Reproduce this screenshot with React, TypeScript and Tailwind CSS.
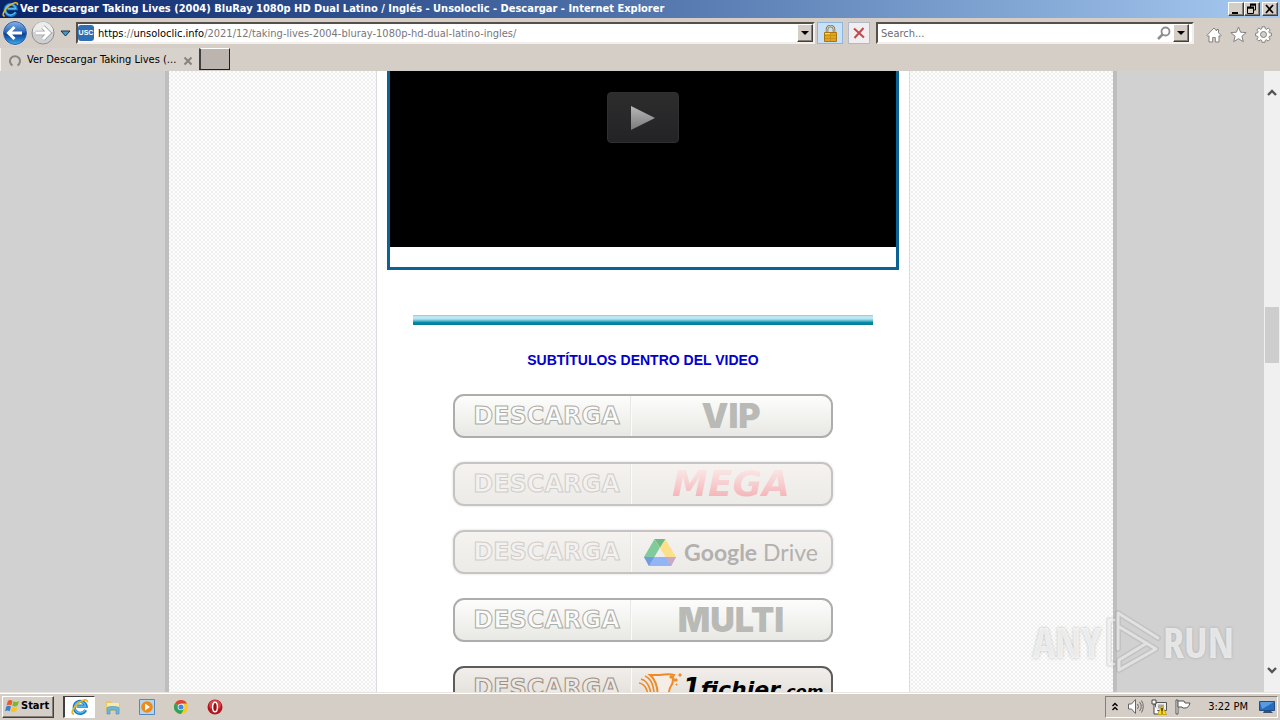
import type { ReactNode } from "react";

const raised =
  "border border-t-white border-l-white border-r-[#404040] border-b-[#404040] bg-[#d5cec7] shadow-[inset_-1px_-1px_0_#848079]";

function IeLogo({ className }: { className: string }) {
  return (
    <svg className={className} viewBox="0 0 18 18" fill="none" aria-hidden="true">
      <path d="M14.6 12.1a6 6 0 1 1 .5-3.9H5.6" stroke="#1677c4" strokeWidth="3.2" />
      <path d="M14.2 11.6a5.6 5.6 0 1 1 .4-3.4H6" stroke="#59b9ee" strokeWidth="1.4" />
      <path d="M3 15.8C-.6 16.4 1.4 10.2 7 5.5 11.8 1.500 17 .3 16.400 4.400" stroke="#e9b51c" strokeWidth="1.7" />
    </svg>
  );
}

function DownTriangle() {
  return (
    <svg className="h-1 w-2" viewBox="0 0 8 4" aria-hidden="true">
      <path d="M0 0h8L4 4z" fill="#000" />
    </svg>
  );
}

function TitleBar() {
  return (
    <header className="flex h-[18px] shrink-0 items-center bg-linear-to-r from-[#0a246a] to-[#a6caf0] pl-[2px] pr-[2px] text-white">
      <IeLogo className="size-[17px] shrink-0" />
      <h1 className="ml-px flex-1 truncate pt-px font-['DejaVu_Sans_Condensed','DejaVu_Sans',sans-serif] text-[11px] font-bold">
        Ver Descargar Taking Lives (2004) BluRay 1080p HD Dual Latino / Inglés - Unsoloclic - Descargar - Internet Explorer
      </h1>
      <div className="flex">
        <button aria-label="Minimize" className={`flex h-[14px] w-4 items-center justify-center ${raised}`}>
          <svg className="size-3" viewBox="0 0 12 12"><path d="M2 9h6v2H2z" fill="#000" /></svg>
        </button>
        <button aria-label="Restore" className={`flex h-[14px] w-4 items-center justify-center ${raised}`}>
          <svg className="size-3" viewBox="0 0 12 12" fill="none" stroke="#000">
            <path d="M4 2h6M4.500 1v3M9.500 1v6H8M2 5h5M1.500 4v6.500h6V4" /><path d="M4 1.500h6M1 4.500h7" strokeWidth="2" />
          </svg>
        </button>
        <button aria-label="Close" className={`ml-[2px] flex h-[14px] w-4 items-center justify-center ${raised}`}>
          <svg className="size-3" viewBox="0 0 12 12"><path d="M2 2l7 8M9 2l-7 8" stroke="#000" strokeWidth="1.7" /></svg>
        </button>
      </div>
    </header>
  );
}

function NavBar() {
  return (
    <nav className="flex h-[30px] shrink-0 items-center bg-[#d5cec7] pl-[2px] pr-2">
      <button aria-label="Back" className="size-[26px] shrink-0">
        <svg viewBox="0 0 26 26">
          <defs>
            <linearGradient id="back" x1="0" y1="0" x2="0" y2="1">
              <stop offset="0" stopColor="#8ab7ea" /><stop offset=".45" stopColor="#2d68b8" />
              <stop offset=".55" stopColor="#0d3f94" /><stop offset="1" stopColor="#41b2f2" />
            </linearGradient>
          </defs>
          <circle cx="13" cy="13" r="12" fill="url(#back)" stroke="#f4f4f4" />
          <circle cx="13" cy="13" r="11.500" fill="none" stroke="#315d9a" />
          <path d="M20 13H7M12.500 7L6.500 13l6 6" fill="none" stroke="#fff" strokeWidth="3" />
        </svg>
      </button>
      <button aria-label="Forward" className="ml-[3px] size-6 shrink-0">
        <svg viewBox="0 0 24 24">
          <circle cx="12" cy="12" r="11" fill="#cfcfd1" stroke="#8d8f92" />
          <path d="M1.800 11a10.200 10.200 0 0 1 20.400 0z" fill="#ececec" />
          <path d="M4.500 12h13M12 6l6 6-6 6" fill="none" stroke="#a2a4a7" strokeWidth="4.600" />
          <path d="M4.500 12h13M12 6l6 6-6 6" fill="none" stroke="#fff" strokeWidth="3" />
        </svg>
      </button>
      <button aria-label="Recent pages" className="ml-[5px] w-[11px] shrink-0">
        <svg viewBox="0 0 11 7"><path d="M1 1h9L5.500 6z" fill="#3f9bc9" stroke="#17324d" /></svg>
      </button>
      <div className="ml-[5px] flex h-[22px] flex-1 items-center border-2 border-t-[#57504a] border-l-[#57504a] border-r-[#f3efec] border-b-[#f3efec] bg-white">
        <span className="flex size-4 shrink-0 items-center justify-center rounded-[3px] bg-[#2f6eb2] font-['Liberation_Sans',sans-serif] text-[7px] font-bold text-white">
          USC
        </span>
        <div
          role="textbox"
          aria-label="Address"
          className="ml-1 flex-1 truncate pt-[2px] font-['DejaVu_Sans_Condensed','DejaVu_Sans',sans-serif] text-[11px] text-[#77777b]"
        >
          <span className="text-black">https</span>://<span className="text-black">unsoloclic.info</span>
          /2021/12/taking-lives-2004-bluray-1080p-hd-dual-latino-ingles/
        </div>
        <button aria-label="Show address list" className={`flex h-[18px] w-4 items-center justify-center ${raised}`}>
          <DownTriangle />
        </button>
      </div>
      <button aria-label="Security report" className="ml-[2px] flex h-[22px] w-[26px] items-center justify-center border border-[#8db6dc] bg-[#c9e0f9]">
        <svg className="h-[17px] w-[15px]" viewBox="0 0 15 17">
          <path d="M4 8V4.500a3.500 3.500 0 0 1 7 0V8" fill="none" stroke="#7d7454" strokeWidth="2.600" />
          <path d="M4 8V4.500a3.500 3.500 0 0 1 7 0V8" fill="none" stroke="#dedac0" />
          <path d="M1.500 7.500h12v9h-12z" fill="#e0a51b" stroke="#a8760e" />
          <path d="M2 10.500h11M2 13.500h11M7.500 8v8" stroke="#c9921a" />
          <path d="M2 8.500h5" stroke="#fbdc68" />
        </svg>
      </button>
      <button aria-label="Stop" className="ml-[5px] flex size-[22px] items-center justify-center border border-[#b3b8c4] bg-[#f0eef0]">
        <svg className="size-3" viewBox="0 0 12 12"><path d="M1 1.500l10 9M10.500 1L1.500 11" stroke="#c24a4c" strokeWidth="2" /></svg>
      </button>
      <div className="ml-[6px] flex h-[22px] w-[318px] items-center border-2 border-t-[#57504a] border-l-[#57504a] border-r-[#f3efec] border-b-[#f3efec] bg-white pr-[3px]">
        <input
          aria-label="Search"
          placeholder="Search..."
          className="min-w-0 flex-1 bg-transparent pt-[2px] pl-[3px] font-['DejaVu_Sans_Condensed','DejaVu_Sans',sans-serif] text-[11px] outline-none placeholder:text-[#6d6d6d]"
        />
        <svg className="mr-[2px] size-[14px]" viewBox="0 0 14 14" fill="none" stroke="#8b8d91" strokeWidth="1.800">
          <circle cx="8.500" cy="5.500" r="4" /><path d="M5.500 8.500L1 13" strokeWidth="2.500" />
        </svg>
        <button aria-label="Search options" className={`flex h-[18px] w-4 items-center justify-center ${raised}`}>
          <DownTriangle />
        </button>
      </div>
      <div className="ml-3 flex items-center gap-2 pt-[3px]">
        <button aria-label="Home" className="size-4">
          <svg viewBox="0 0 16 16">
            <path d="M8 1L.8 8.500l1.200 1 1-.8V15h3.700v-4.500h2.600V15H13V8.700l1 .8 1.200-1L12.500 5.800V2.500h-1.800V4z" fill="#fff" stroke="#85817e" />
          </svg>
        </button>
        <button aria-label="Favorites" className="size-[17px]">
          <svg viewBox="0 0 17 17">
            <path d="M8.500 1l2.100 5.200 5.600.4-4.300 3.600 1.400 5.500-4.800-3-4.800 3 1.400-5.500L.8 6.600l5.600-.4z" fill="#fff" stroke="#85817e" />
          </svg>
        </button>
        <button aria-label="Tools" className="size-[17px]">
          <svg viewBox="0 0 17 17">
            <path
              d="M7 .8h3l.3 2 1.300.6L13.300 2l1.900 2-1.300 1.500.5 1.400 2 .3v2.700l-2 .3-.5 1.300 1.300 1.600-2 2-1.600-1.300-1.300.5-.3 2H7l-.3-2-1.300-.5-1.600 1.300-2-2 1.300-1.600-.5-1.300-2-.3V7.200l2-.3.500-1.300L1.800 4l2-2 1.600 1.300 1.300-.5z"
              fill="#fff" stroke="#85817e"
            />
            <circle cx="8.500" cy="8.500" r="3" fill="#d5cec7" stroke="#85817e" />
          </svg>
        </button>
      </div>
    </nav>
  );
}

function TabStrip() {
  return (
    <div className="flex h-[23px] shrink-0 items-start bg-[#d5cec7] font-['DejaVu_Sans_Condensed','DejaVu_Sans',sans-serif] text-[11px]">
      <div className="flex h-full w-[199px] items-center border-l border-[#f5f2ef] bg-[#d8d2cc] pt-[2px] pl-2 pr-[6px]">
        <svg className="size-3 shrink-0" viewBox="0 0 12 12" fill="none">
          <path d="M3.500 10.500a5 5 0 1 1 5 0" stroke="#8a8683" strokeWidth="2" />
        </svg>
        <span className="ml-[6px] flex-1 whitespace-nowrap">Ver Descargar Taking Lives (...</span>
        <button aria-label="Close tab" className="size-[10px] shrink-0">
          <svg viewBox="0 0 10 10"><path d="M1.500 1.500l7 7M8.500 1.500l-7 7" stroke="#87827e" strokeWidth="2" /></svg>
        </button>
      </div>
      <button
        aria-label="New tab"
        className="h-[22px] w-[31px] border border-t-white border-l-2 border-l-[#404040] border-r-[#202020] border-b-[#202020] bg-[#bcb4ae]"
      />
    </div>
  );
}

type Tone = "gray" | "faint" | "strong";

const frames: Record<Tone, string> = {
  gray: "border-[#adaeab] from-[#fdfefc] to-[#e8e9e4]",
  faint: "border-[#c6c4c2] from-[#f5f2f0] to-[#ecebe8] shadow-[0_0_2px_1px_#f0efee]",
  strong: "border-[#5b5c5b] from-[#f1eeeb] to-[#dfd9d3]",
};

const engraved: Record<Tone, string> = {
  gray: "[-webkit-text-stroke:1px_#acaca9] text-[#fbfbf9]",
  faint: "[-webkit-text-stroke:1px_#d0cdca] text-[#f4f1ef]",
  strong: "[-webkit-text-stroke:1px_#9b8f86] text-[#eee9e4]",
};

function DownloadButton({ tone, label, children }: { tone: Tone; label: string; children: ReactNode }) {
  return (
    <a
      href="#descarga"
      aria-label={`Descarga ${label}`}
      className={`flex h-11 w-[380px] shrink-0 items-center rounded-[11px] border-2 bg-linear-to-b ${frames[tone]}`}
    >
      <span className="flex h-full w-[176px] items-center justify-center border-r border-[#e8e8e4] pl-2 shadow-[1px_0_0_#fbfbf9]">
        <span className={`font-['DejaVu_Sans',sans-serif] text-[24px] leading-6 font-bold ${engraved[tone]}`}>DESCARGA</span>
      </span>
      <span className="flex h-full flex-1 items-center justify-center">{children}</span>
    </a>
  );
}

function DriveLogo() {
  return (
    <svg className="h-[27px] w-8 shrink-0" viewBox="0 0 32 27" aria-hidden="true">
      <path d="M10.500 0L0 18l5 9L16 8.500z" fill="#7fcb9b" />
      <path d="M10.500 0h10.800L32 18H21.500z" fill="#fce18a" />
      <path d="M10.500 18H32l-5 9H5z" fill="#94b5f5" />
      <path d="M10.500 0h10.800L16 8.500z" fill="#6db98a" />
      <path d="M21.500 18H32l-5 9z" fill="#c9a9c4" />
      <path d="M0 18h10.500L5 27z" fill="#739be5" />
    </svg>
  );
}

function FichierLogo() {
  return (
    <svg className="h-[34px] w-[44px] shrink-0" viewBox="0 0 44 34" fill="none" stroke="#f08a24" aria-hidden="true">
      <path d="M0 12c7 1 9 8 10 20M2 8c7 2 10 9 11 24M6 5c7 3 9 10 10 26" strokeWidth="1.600" />
      <path d="M11 4h10c5 0 8-2 14 0-3 4 1 6-3 11-3 4-1 7-4 13l-9 4c0-13-1-22-8-28z" fill="#f5ede6" strokeWidth="2" />
      <path d="M35 8h3v2h-3zM40 3h2v2h-2zM37 13h1v1h-1zM31 5h2v2h-2z" fill="#f08a24" strokeWidth="1" />
    </svg>
  );
}

function Page() {
  return (
    <main className="flex min-w-0 flex-1 justify-center overflow-hidden bg-[#d1d1d1] pl-[18px]">
      <div className="flex w-full max-w-[952px] justify-center border-x-4 border-[#bebebe] bg-[#fbfbfb] bg-[conic-gradient(#eeeeee_25%,#fdfdfd_0_50%,#f1f1f1_0_75%,#fdfdfd_0)] bg-[length:4px_4px] pl-1">
        <article className="flex w-[534px] flex-col items-center border-x border-[#d9dce0] bg-white">
          <div className="flex w-[512px] shrink-0 flex-col border-[3px] border-t-0 border-[#0a6394] bg-white pb-5">
            <div className="flex h-44 items-start justify-center bg-black pt-[21px]">
              <button
                aria-label="Play video"
                className="flex h-[51px] w-[72px] items-center justify-center rounded-[4px] border border-[#303032] bg-linear-to-b from-[#2d2d2d] to-[#232327]"
              >
                <svg className="h-6 w-6" viewBox="0 0 24 24">
                  <defs>
                    <linearGradient id="play" x1="0" y1="0" x2="0" y2="1">
                      <stop offset="0" stopColor="#b8b8b8" /><stop offset="1" stopColor="#797979" />
                    </linearGradient>
                  </defs>
                  <path d="M0 0l24 12L0 24z" fill="url(#play)" />
                </svg>
              </button>
            </div>
          </div>
          <div className="mt-[45px] h-[10px] w-[460px] shrink-0 bg-linear-[180deg,#8fc8d6_0%,#c8edf6_20%,#b0e2ee_40%,#55b4cd_60%,#068aa6_75%,#087c98_100%]" />
          <h2 className="mt-[25px] mb-6 font-['Liberation_Sans',Arial,sans-serif] text-[14px] leading-5 font-bold text-[#0000d0]">
            SUBTÍTULOS DENTRO DEL VIDEO
          </h2>
          <div className="flex flex-col gap-6">
            <DownloadButton tone="gray" label="VIP">
              <span className="font-[Inter,sans-serif] text-[34px] leading-10 font-black text-[#b9bab6]">VIP</span>
            </DownloadButton>
            <DownloadButton tone="faint" label="Mega">
              <span className="bg-linear-to-b from-[#f9e2e2] from-20% to-[#f4b7bb] to-80% bg-clip-text px-1 font-['DejaVu_Sans',sans-serif] text-[36px] leading-10 font-bold text-transparent italic">
                MEGA
              </span>
            </DownloadButton>
            <DownloadButton tone="faint" label="Google Drive">
              <DriveLogo />
              <span className="ml-2 font-[Lato,sans-serif] text-[23px] leading-10 whitespace-nowrap text-[#b2b1af]">
                <span className="font-bold">Google</span> Drive
              </span>
            </DownloadButton>
            <DownloadButton tone="gray" label="Multi">
              <span className="font-[Inter,sans-serif] text-[34px] leading-10 font-black text-[#b9bab6]">MULTI</span>
            </DownloadButton>
            <DownloadButton tone="strong" label="1fichier.com">
              <FichierLogo />
              <span className="font-['DejaVu_Sans',sans-serif] font-bold whitespace-nowrap text-black italic">
                <span className="text-[26px]">1</span>
                <span className="text-[22px]">fichier</span>
                <span className="text-[16px]">.com</span>
              </span>
            </DownloadButton>
          </div>
        </article>
      </div>
    </main>
  );
}

function ScrollBar() {
  return (
    <aside className="flex w-4 shrink-0 flex-col items-center justify-between bg-[#f0f0f0] py-4" aria-label="Scroll bar">
      <button aria-label="Scroll up" className="w-[10px]">
        <svg viewBox="0 0 10 10" fill="none"><path d="M1 8l4-4 4 4" stroke="#555" strokeWidth="2.400" /></svg>
      </button>
      <div className="flex w-full flex-1 flex-col">
        <div className="grow-[210]" />
        <div className="mx-px h-14 bg-[#cdcdcd]" />
        <div className="grow-[304]" />
      </div>
      <button aria-label="Scroll down" className="w-[10px]">
        <svg viewBox="0 0 10 10" fill="none"><path d="M1 2l4 4 4-4" stroke="#555" strokeWidth="2.400" /></svg>
      </button>
    </aside>
  );
}

function Watermark() {
  return (
    <div className="pointer-events-none absolute right-[46px] bottom-[18px] flex items-center font-['Open_Sans_Condensed','Roboto_Condensed','Noto_Sans_Condensed',Roboto,sans-serif] text-[42px] leading-[64px] font-light text-white/70 [text-shadow:0_0_3px_#8888]">
      <span>ANY</span>
      <svg className="h-16 w-[62px]" viewBox="0 0 62 64" fill="none" strokeLinejoin="round" strokeLinecap="round">
        <g stroke="#777" strokeOpacity=".16" strokeWidth="6">
          <path d="M13 10H8v44h5M17 39V3l40 25M17 16l38 23-37 21V50l28-17" />
        </g>
        <g stroke="#fff" strokeOpacity=".5" strokeWidth="3">
          <path d="M13 10H8v44h5M17 39V3l40 25M17 16l38 23-37 21V50l28-17" />
        </g>
      </svg>
      <span>RUN</span>
    </div>
  );
}

function TaskBar() {
  return (
    <footer className="flex h-7 shrink-0 items-center border-t border-[#e8e4e0] bg-[#d5cec7] pl-[2px] font-['DejaVu_Sans_Condensed','DejaVu_Sans',sans-serif] text-[11px] shadow-[inset_0_1px_0_#fff]">
      <button className={`flex h-[22px] w-[52px] items-center pl-[2px] font-bold ${raised}`}>
        <svg className="mr-px size-[15px] shrink-0" viewBox="0 0 16 16">
          <path d="M3 2c2-1.500 3.500-1 5 0L6.700 7C5 6 3.500 6 1.700 7z" fill="#e95b24" />
          <path d="M9 2.500c2 1 3.500 1 6-.3L13.500 7c-2 1.200-3.500 1.200-5.700.3z" fill="#7db72f" />
          <path d="M1.400 8c1.800-1 3.300-1 5 0L5 13c-1.700-1-3.200-1-5 0z" fill="#3a7fd0" />
          <path d="M7.500 8.300c2 1 3.600 1 5.700-.2L12 13c-2 1.300-3.700 1.300-5.900.3z" fill="#f7c525" />
        </svg>
        Start
      </button>
      <button aria-label="Internet Explorer" className="ml-[9px] flex h-[22px] w-8 items-center justify-center border border-t-[#404040] border-l-2 border-l-[#404040] border-r-white border-b-white bg-white">
        <IeLogo className="size-[18px]" />
      </button>
      <button aria-label="Windows Explorer" className="ml-[9px] flex w-[18px] justify-center">
        <svg className="size-4" viewBox="0 0 16 16">
          <path d="M1 2h5l1 2h8v8H1z" fill="#e9c95f" /><path d="M2 4h12v5H2z" fill="#f9eaa8" />
          <path d="M2 9c0-2 12-2 12 0v6h-3v-4H5v4H2z" fill="#6cb7df" stroke="#478fbb" strokeWidth=".6" />
        </svg>
      </button>
      <button aria-label="Media Player" className="ml-4 flex w-[18px] justify-center">
        <svg className="size-4" viewBox="0 0 16 16">
          <path d="M.5.500h15v15H.5z" fill="#b6d4ed" stroke="#5189c0" />
          <circle cx="8" cy="8" r="5.800" fill="#ef8a18" /><path d="M6 4.500l5 3.500-5 3.500z" fill="#fff" />
        </svg>
      </button>
      <button aria-label="Chrome" className="ml-4 flex w-[18px] justify-center">
        <svg className="size-[14px]" viewBox="0 0 14 14">
          <circle cx="7" cy="7" r="7" fill="#f5c928" />
          <path d="M7 7L.9 3.500A7 7 0 0 1 13.100 3.500H7z" fill="#dc4437" />
          <path d="M7 7L.9 3.500A7 7 0 0 0 7 14l3-5z" fill="#2ca45a" />
          <circle cx="7" cy="7" r="3.300" fill="#fff" /><circle cx="7" cy="7" r="2.600" fill="#4285e8" />
        </svg>
      </button>
      <button aria-label="Opera" className="ml-4 flex w-[18px] justify-center">
        <svg className="size-4" viewBox="0 0 16 16">
          <circle cx="8" cy="8" r="7.500" fill="#b3161d" /><ellipse cx="8" cy="6" rx="6" ry="5" fill="#d64348" />
          <ellipse cx="8" cy="8" rx="2.400" ry="4.800" fill="#981016" stroke="#fff" strokeWidth="1.400" />
        </svg>
      </button>
      <div className="mr-[2px] ml-auto flex h-[22px] items-center border border-t-[#848079] border-l-[#848079] border-r-white border-b-white pr-[2px] pl-[6px]">
        <button aria-label="Show hidden icons" className="w-[6px]">
          <svg viewBox="0 0 6 9" fill="none"><path d="M.5 4L3 1.500 5.500 4M.5 8L3 5.500 5.500 8" stroke="#000" strokeWidth="1.400" /></svg>
        </button>
        <button aria-label="Volume" className="ml-[9px] size-[17px]">
          <svg viewBox="0 0 17 17" fill="#fff" stroke="#666">
            <path d="M1.500 6h3l4-4.500v14l-4-4.500h-3z" /><path d="M10.500 6q2 2.500 0 5M12.500 4q3.500 4.500 0 9M14.500 2.500q3.500 6 0 12" fill="none" />
          </svg>
        </button>
        <button aria-label="Network warning" className="ml-[7px] size-4">
          <svg viewBox="0 0 16 16">
            <path d="M4.500 3.500h11v8h-11z" fill="#eee" stroke="#555" /><path d="M7 5.500h6v4H7z" fill="#aaa" />
            <path d="M1 1h4v4H1zM3 5v10h5" fill="#fff" stroke="#444" />
            <path d="M11 6.500l4.500 9h-9z" fill="#ffd91c" stroke="#b99200" strokeWidth=".7" />
            <path d="M11 9v3.500M11 13.500v1" stroke="#000" strokeWidth="1.200" />
          </svg>
        </button>
        <button aria-label="Action center" className="ml-2 size-4">
          <svg viewBox="0 0 16 16" fill="#fff" stroke="#555">
            <path d="M1 1h2v14H1z" /><path d="M3 2h6l1 2h5c-1 3-2 5-5 5H8L7 8H3z" />
          </svg>
        </button>
        <time className="ml-[17px] w-10 pt-px text-right whitespace-nowrap">3:22 PM</time>
        <button aria-label="Show desktop" className="ml-[11px] size-4">
          <svg viewBox="0 0 16 16">
            <path d="M.5 2.500h15v9H.5z" fill="#256bc0" stroke="#234d82" /><path d="M1 3h14L3 10z" fill="#5a9be0" />
            <path d="M5 12h7l2 2H4z" fill="#3a506e" />
          </svg>
        </button>
      </div>
    </footer>
  );
}

export default function App() {
  return (
    <div className="flex h-screen flex-col overflow-hidden">
      <TitleBar />
      <NavBar />
      <TabStrip />
      <div className="relative flex min-h-0 flex-1">
        <Page />
        <ScrollBar />
        <Watermark />
      </div>
      <TaskBar />
    </div>
  );
}
